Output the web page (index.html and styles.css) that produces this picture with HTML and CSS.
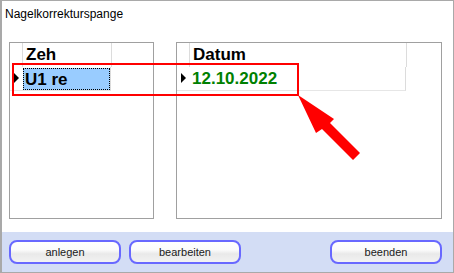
FILE: index.html
```html
<!DOCTYPE html>
<html lang="de">
<head>
    <meta charset="UTF-8">
    <title>Nagelkorrekturspange</title>
    <link rel="stylesheet" href="styles.css">
</head>
<body>

    <div class="window">
        <div class="title">Nagelkorrekturspange</div>

        <div class="panels">
            <div class="grid grid-left">
                <div class="grid-row head">
                    <div class="ind"></div>
                    <div class="cell">Zeh</div>
                </div>
                <div class="grid-row data">
                    <div class="ind"><span class="tri"></span></div>
                    <div class="cell"><span class="sel">U1 re</span></div>
                </div>
            </div>

            <div class="grid grid-right">
                <div class="grid-row head">
                    <div class="ind"></div>
                    <div class="cell">Datum</div>
                </div>
                <div class="grid-row data">
                    <div class="ind"><span class="tri"></span></div>
                    <div class="cell datum">12.10.2022</div>
                </div>
            </div>
        </div>

        <div class="bar">
            <button class="btn">anlegen</button>
            <button class="btn">bearbeiten</button>
            <span class="spacer"></span>
            <button class="btn">beenden</button>
        </div>

        <!-- Markierung -->
        <div class="mark"></div>
        <svg class="arrow" width="454" height="273" viewBox="0 0 454 273">
            <polygon points="298,95 334,119 330,123 360,153 353,160 322,129 316,133" fill="#ff0000"/>
        </svg>
    </div>

</body>
</html>
```

FILE: styles.css
```css
body {
    margin: 0;
    font-family: "Liberation Sans", Arial, sans-serif;
}
.window {
    position: relative;
    width: 454px;
    height: 273px;
    box-sizing: border-box;
    border: 1px solid #a9a9a9;
    border-left-width: 2px;
    background: #fff;
    display: flex;
    flex-direction: column;
    overflow: hidden;
}
.title {
    height: 41px;
    box-sizing: border-box;
    padding: 6px 0 0 3px;
    font-size: 12px;
    line-height: 14px;
    color: #000;
}
.panels {
    display: flex;
    gap: 22px;
    padding-left: 7px;
    height: 177px;
}
.grid {
    box-sizing: border-box;
    border: 1px solid #a0a0a0;
    height: 177px;
}
.grid-left {
    width: 145px;
}
.grid-right {
    width: 266px;
}
.grid-row {
    display: flex;
    height: 24px;
    font-size: 17px;
    font-weight: bold;
    line-height: 24px;
}
.ind {
    width: 12px;
    position: relative;
}
.head .ind {
    border-right: 1px solid #dcdcdc;
}
.cell {
    box-sizing: border-box;
    padding-left: 3px;
    border-right: 1px solid #dcdcdc;
    color: #000;
}
.grid-left .cell {
    width: 89px;
}
.grid-right .cell {
    width: 217px;
}
.data .ind,
.data .cell {
    border-bottom: 1px solid #e6e6e6;
}
.grid-left .data .cell {
    padding-left: 1px;
}
.tri {
    position: absolute;
    left: 4px;
    top: 6px;
    width: 0;
    height: 0;
    border-top: 5px solid transparent;
    border-bottom: 5px solid transparent;
    border-left: 5px solid #000;
}
.sel {
    display: block;
    margin-top: 1px;
    height: 22px;
    line-height: 21px;
    box-sizing: border-box;
    padding-left: 1px;
    background: #99ccff;
    border: 1px dotted #000;
}
.datum {
    color: #008000;
}
.bar {
    margin-top: 13px;
    flex: 1;
    background: #d3ddf5;
    display: flex;
    align-items: flex-start;
    gap: 8px;
    padding: 8px 11px 0 7px;
}
.spacer {
    flex: 1;
}
.btn {
    width: 112px;
    height: 24px;
    box-sizing: border-box;
    border: 2px solid #6868ff;
    border-radius: 8px;
    background: linear-gradient(#ffffff 0%, #fbfbfb 40%, #e9e9e9 60%, #f2f2f2 100%);
    font-family: "Liberation Sans", Arial, sans-serif;
    font-size: 11px;
    color: #1a1a1a;
    padding: 0;
}
.mark {
    position: absolute;
    left: 10px;
    top: 62px;
    width: 287px;
    height: 33px;
    box-sizing: border-box;
    border: 2px solid #ff0000;
}
.arrow {
    position: absolute;
    left: -2px;
    top: -1px;
}
```
